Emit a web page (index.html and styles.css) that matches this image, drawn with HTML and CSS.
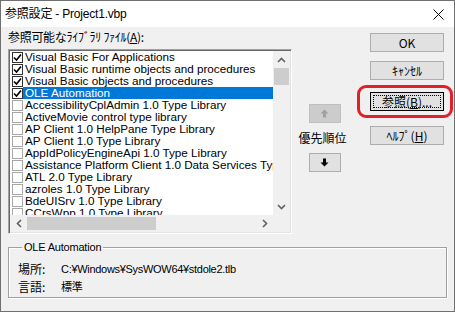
FILE: index.html
```html
<!DOCTYPE html>
<html lang="ja">
<head>
  <meta charset="UTF-8">
  <title>参照設定 - Project1.vbp</title>
  <link rel="stylesheet" href="styles.css">
</head>
<body>
  <div class="window">
    <div class="titlebar">
      <span class="title">参照設定 - Project1.vbp</span>
      <svg class="close" width="11" height="11" viewBox="0 0 11 11"><path d="M0.5 0.5 L10.5 10.5 M10.5 0.5 L0.5 10.5" stroke="#000" stroke-width="1"/></svg>
    </div>

    <div class="client">
      <div class="top">
        <div class="left-col">
          <div class="label">参照可能なﾗｲﾌﾞﾗﾘ ﾌｧｲﾙ(<u>A</u>):</div>
          <div class="listbox">
            <div class="items">
              <div class="item"><span class="check on"><svg width="9" height="9" viewBox="0 0 9 9"><path d="M1 4.5 L3.5 7 L8 1.5" fill="none" stroke="#000" stroke-width="1.6"/></svg></span><span class="text">Visual Basic For Applications</span></div>
              <div class="item"><span class="check on"><svg width="9" height="9" viewBox="0 0 9 9"><path d="M1 4.5 L3.5 7 L8 1.5" fill="none" stroke="#000" stroke-width="1.6"/></svg></span><span class="text">Visual Basic runtime objects and procedures</span></div>
              <div class="item"><span class="check on"><svg width="9" height="9" viewBox="0 0 9 9"><path d="M1 4.5 L3.5 7 L8 1.5" fill="none" stroke="#000" stroke-width="1.6"/></svg></span><span class="text">Visual Basic objects and procedures</span></div>
              <div class="item selected"><span class="check on"><svg width="9" height="9" viewBox="0 0 9 9"><path d="M1 4.5 L3.5 7 L8 1.5" fill="none" stroke="#000" stroke-width="1.6"/></svg></span><span class="text">OLE Automation</span></div>
              <div class="item"><span class="check"></span><span class="text">AccessibilityCplAdmin 1.0 Type Library</span></div>
              <div class="item"><span class="check"></span><span class="text">ActiveMovie control type library</span></div>
              <div class="item"><span class="check"></span><span class="text">AP Client 1.0 HelpPane Type Library</span></div>
              <div class="item"><span class="check"></span><span class="text">AP Client 1.0 Type Library</span></div>
              <div class="item"><span class="check"></span><span class="text">AppIdPolicyEngineApi 1.0 Type Library</span></div>
              <div class="item"><span class="check"></span><span class="text">Assistance Platform Client 1.0 Data Services Type Library</span></div>
              <div class="item"><span class="check"></span><span class="text">ATL 2.0 Type Library</span></div>
              <div class="item"><span class="check"></span><span class="text">azroles 1.0 Type Library</span></div>
              <div class="item"><span class="check"></span><span class="text">BdeUISrv 1.0 Type Library</span></div>
              <div class="item"><span class="check"></span><span class="text">CCrsWpp 1.0 Type Library</span></div>
            </div>
            <div class="vscroll">
              <div class="sb-btn"><svg width="9" height="6" viewBox="0 0 9 6"><path d="M1 5 L4.5 1.5 L8 5" fill="none" stroke="#606060" stroke-width="1.6"/></svg></div>
              <div class="vtrack"><div class="vthumb"></div></div>
              <div class="sb-btn"><svg width="9" height="6" viewBox="0 0 9 6"><path d="M1 1 L4.5 4.5 L8 1" fill="none" stroke="#606060" stroke-width="1.6"/></svg></div>
            </div>
            <div class="hscroll">
              <div class="sb-btn"><svg width="6" height="9" viewBox="0 0 6 9"><path d="M5 1 L1.5 4.5 L5 8" fill="none" stroke="#606060" stroke-width="1.6"/></svg></div>
              <div class="htrack"><div class="hthumb"></div></div>
              <div class="sb-btn"><svg width="6" height="9" viewBox="0 0 6 9"><path d="M1 1 L4.5 4.5 L1 8" fill="none" stroke="#606060" stroke-width="1.6"/></svg></div>
            </div>
            <div class="corner"></div>
          </div>
        </div>

        <div class="mid-col">
          <button class="btn arrow" disabled><svg width="9" height="9" viewBox="0 0 9 9"><path d="M4.5 0.5 L8.5 4.5 L6 4.5 L6 8.5 L3 8.5 L3 4.5 L0.5 4.5 Z" fill="#a0a0a0"/></svg></button>
          <div class="priority">優先順位</div>
          <button class="btn arrow"><svg width="9" height="9" viewBox="0 0 9 9"><path d="M4.5 8.5 L8.5 4.5 L6 4.5 L6 0.5 L3 0.5 L3 4.5 L0.5 4.5 Z" fill="#000"/></svg></button>
        </div>

        <div class="right-col">
          <button class="btn cmd ok">OK</button>
          <button class="btn cmd cancel">ｷｬﾝｾﾙ</button>
          <div class="highlight">
            <button class="btn cmd browse"><span class="focus">参照(<u>B</u>)...</span></button>
          </div>
          <button class="btn cmd help">ﾍﾙﾌﾟ(<u>H</u>)</button>
        </div>
      </div>

      <fieldset class="info">
        <legend>OLE Automation</legend>
        <div class="info-row"><span class="info-key">場所:</span><span class="info-val">C:¥Windows¥SysWOW64¥stdole2.tlb</span></div>
        <div class="info-row"><span class="info-key">言語:</span><span class="info-val">標準</span></div>
      </fieldset>
    </div>
  </div>
</body>
</html>
```

FILE: styles.css
```css
body {
  margin: 0;
  font-family: "Liberation Sans", "Noto Sans CJK JP", sans-serif;
  font-size: 12px;
  color: #000;
  background: #ffffff;
}

.window {
  width: 455px;
  height: 312px;
  box-sizing: border-box;
  border: 1px solid #707070;
  display: flex;
  flex-direction: column;
  background: #f0f0f0;
}

.titlebar {
  height: 26px;
  flex: none;
  background: #ffffff;
  display: flex;
  align-items: center;
  justify-content: space-between;
  padding: 0 10px 0 4px;
}

.title {
  font-size: 12px;
  line-height: 14px;
  letter-spacing: -0.2px;
}

.client {
  flex: 1;
  padding: 4px 7px 0 7px;
}

.top {
  display: flex;
}

.left-col {
  width: 284px;
}

.label {
  font-family: "Noto Sans CJK JP", sans-serif;
  line-height: 12px;
  height: 12px;
  font-size: 12px;
  letter-spacing: -0.3px;
}

.listbox {
  margin-top: 6px;
  height: 185px;
  box-sizing: border-box;
  background: #ffffff;
  border-top: 1px solid #a0a0a0;
  border-left: 1px solid #a0a0a0;
  border-right: 1px solid #ffffff;
  border-bottom: 1px solid #ffffff;
  box-shadow: inset 1px 1px 0 #696969, inset -1px -1px 0 #e3e3e3;
  padding: 1px;
  display: grid;
  grid-template-columns: 1fr 17px;
  grid-template-rows: 1fr 17px;
}

.items {
  overflow: hidden;
  font-family: "Liberation Sans", sans-serif;
  font-size: 11.7px;
}

.item {
  height: 12px;
  display: flex;
  align-items: center;
  white-space: nowrap;
}

.check {
  flex: none;
  width: 11px;
  height: 11px;
  box-sizing: border-box;
  margin-left: 2px;
  border: 1px solid #a8a8a8;
  background: #ffffff;
  display: flex;
  align-items: center;
  justify-content: center;
}

.check.on {
  border-color: #333333;
}

.text {
  padding-left: 2px;
  line-height: 12px;
  flex: 1;
}

.selected .text {
  background: #0078d7;
  color: #ffffff;
}

.vscroll {
  display: flex;
  flex-direction: column;
  background: #f0f0f0;
}

.sb-btn {
  flex: none;
  width: 17px;
  height: 17px;
  display: flex;
  align-items: center;
  justify-content: center;
}

.vtrack {
  flex: 1;
}

.vthumb {
  height: 17px;
  margin: 0 1px;
  background: #cdcdcd;
}

.hscroll {
  display: flex;
  background: #f0f0f0;
}

.htrack {
  flex: 1;
  display: flex;
  align-items: center;
}

.hthumb {
  width: 129px;
  height: 13px;
  background: #cdcdcd;
}

.corner {
  background: #f0f0f0;
}

.btn {
  font-family: "Noto Sans CJK JP", sans-serif;
  font-size: 12px;
  color: #000;
  background: #e1e1e1;
  border: 1px solid #adadad;
  border-radius: 0;
  padding: 0;
  box-sizing: border-box;
  display: flex;
  align-items: center;
  justify-content: center;
  line-height: 12px;
}

.mid-col {
  width: 49px;
  margin-left: 6px;
  display: flex;
  flex-direction: column;
  align-items: center;
}

.arrow {
  width: 32px;
  height: 19px;
  margin-left: 4px;
}

.arrow:disabled {
  background: #cccccc;
  border-color: #bfbfbf;
}

.arrow:first-child {
  margin-top: 73px;
}

.priority {
  font-family: "Noto Sans CJK JP", sans-serif;
  margin: 9px 0 9px;
  line-height: 12px;
}

.right-col {
  margin-left: 23px;
  width: 75px;
  display: flex;
  flex-direction: column;
  align-items: flex-start;
}

.cmd {
  width: 74px;
  height: 19px;
}

.ok {
  margin-top: 2px;
}

.cancel {
  margin-top: 9px;
}

.highlight {
  margin: 5px 0 0 -13px;
  width: 96px;
  height: 33px;
  box-sizing: border-box;
  border: 3px solid #e0202a;
  border-radius: 9px;
  display: flex;
  align-items: center;
  padding-left: 10px;
}

.browse {
  border: 1px solid #000;
  padding: 2px;
}

.focus {
  flex: 1;
  align-self: stretch;
  display: flex;
  align-items: center;
  justify-content: center;
  border: 1px dotted #000;
}

.help {
  margin-top: 8px;
}

.info {
  margin: 7px 0 0 0;
  padding: 7px 9px 0 9px;
  height: 57px;
  box-sizing: border-box;
  border: 1px solid #a0a0a0;
  box-shadow: 1px 1px 0 #ffffff, inset 1px 1px 0 #ffffff;
}

.info legend {
  padding: 0 2px;
  margin-left: 4px;
  line-height: 12px;
  font-size: 11px;
  letter-spacing: -0.2px;
}

.info-row {
  display: flex;
  line-height: 18px;
}

.info-key {
  font-family: "Noto Sans CJK JP", sans-serif;
  width: 43px;
}

.info-val {
  font-size: 11px;
  letter-spacing: -0.3px;
}
```
